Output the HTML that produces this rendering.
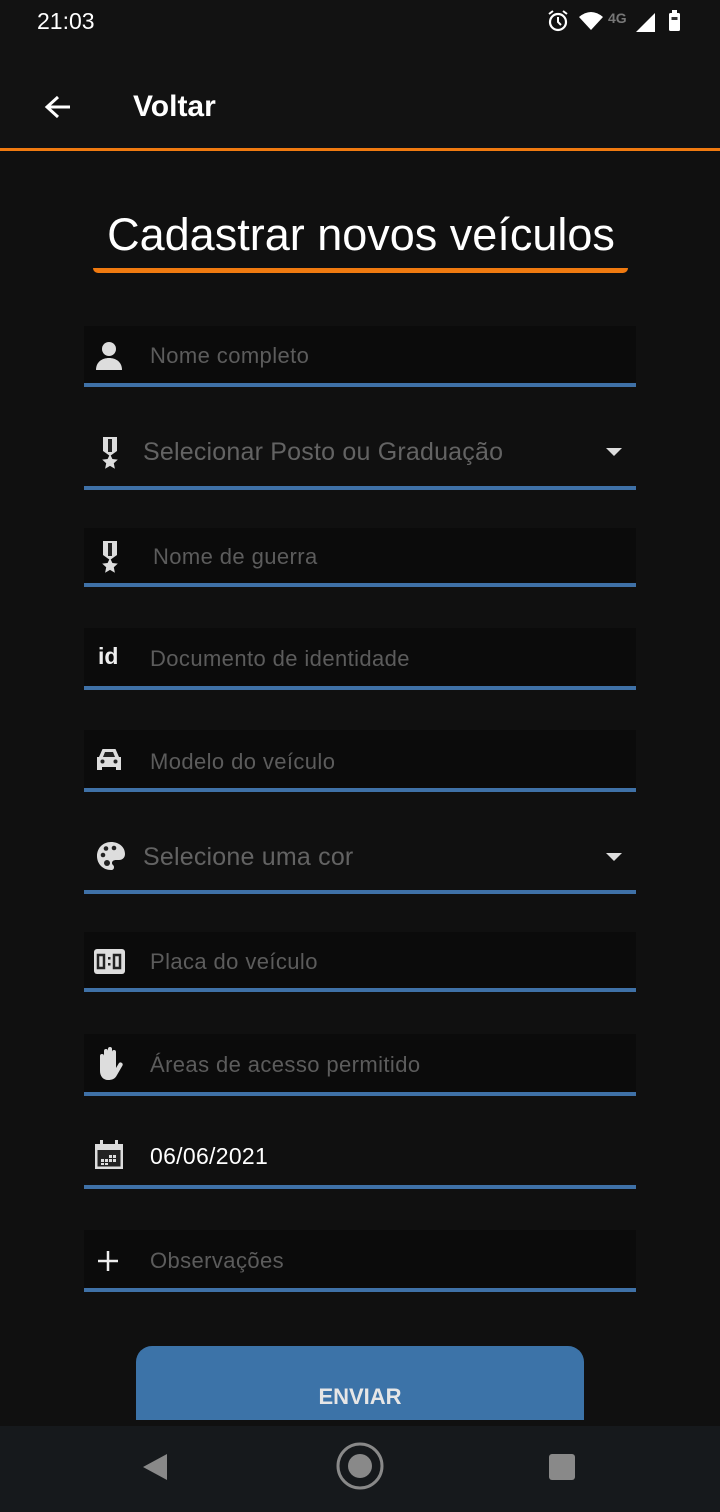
<!DOCTYPE html>
<html><head><meta charset="utf-8"><style>
*{margin:0;padding:0;box-sizing:border-box}
body{width:720px;height:1512px;background:#101010;position:relative;overflow:hidden;font-family:"Liberation Sans",sans-serif}
.abs{position:absolute}
.top{left:0;top:0;width:720px;height:148px;background:#121212}
.orange{left:0;top:148px;width:720px;height:3px;background:#f07a10}
.box{position:absolute;left:84px;width:552px;background:#0b0b0b}
.ul{position:absolute;left:84px;width:552px;height:4px;background:#3f71a7}
.ph{position:absolute;color:#5c5c5c;font-size:22px;letter-spacing:0.4px;line-height:1;white-space:nowrap}
.sel{font-size:25px;color:#636363;letter-spacing:0.2px}
.ic{position:absolute;left:94px}
.arr{position:absolute;left:606px;width:0;height:0;border-left:8px solid transparent;border-right:8px solid transparent;border-top:8px solid #ddd}
</style></head><body>
<div class="abs top"></div>
<div class="abs orange"></div>
<div class="abs" style="left:37px;top:8px;color:#fff;font-size:23px">21:03</div>
<svg class="abs" style="left:545px;top:8px" width="145" height="26" viewBox="0 0 145 26">
<circle cx="13" cy="14" r="8" fill="none" stroke="#fff" stroke-width="2.2"/><path d="M13 9v5l3 3" stroke="#fff" stroke-width="2" fill="none"/><path d="M4 6l4-3M22 6l-4-3" stroke="#fff" stroke-width="2"/>
<path d="M34 9 Q46 -1 58 9 L46 22Z" fill="#fff"/>
<text x="63" y="15" fill="#777" font-size="14" font-family="Liberation Sans" font-weight="bold">4G</text>
<path d="M91 24 L110 5 L110 24Z" fill="#fff"/>
<rect x="124" y="5" width="11" height="18" rx="1.5" fill="#fff"/><rect x="127" y="2" width="5" height="4" fill="#fff"/><rect x="126.5" y="9" width="6" height="3" fill="#333"/>
</svg>
<svg class="abs" style="left:44px;top:94px" width="28" height="26" viewBox="0 0 28 26"><path d="M26 13H4M14 3L3 13l11 10" stroke="#fff" stroke-width="3" fill="none"/></svg>
<div class="abs" style="left:133px;top:90px;color:#fff;font-size:30px;font-weight:bold">Voltar</div>
<div class="abs" style="left:0;width:720px;top:209px;text-align:center;color:#fff;font-size:45px;padding-left:2px">Cadastrar novos veículos</div>
<div class="abs" style="left:93px;top:268px;width:535px;height:5px;background:#f07a10;border-radius:0 0 6px 6px"></div>

<div class="box" style="top:326px;height:58px"></div>
<svg class="ic" style="top:340px" width="30" height="32" viewBox="0 0 30 32"><circle cx="15" cy="9" r="7" fill="#ddd"/><path d="M2 30c0-8 6-12 13-12s13 4 13 12z" fill="#ddd"/></svg>
<div class="ph" style="left:150px;top:345px">Nome completo</div>
<div class="ul" style="top:383px"></div>

<svg class="ic" style="top:437px;left:100px" width="20" height="32" viewBox="0 0 20 32"><path d="M3 0h14v14l-7 5-7-5z" fill="#ddd"/><path d="M8 2v13h4V2z" fill="#222"/><path d="M10 17l2.4 5 5.4.6-4 3.7 1.1 5.4-4.9-2.8-4.9 2.8 1.1-5.4-4-3.7 5.4-.6z" fill="#ddd"/></svg>
<div class="ph sel" style="left:143px;top:440px">Selecionar Posto ou Graduação</div>
<div class="arr" style="top:448px"></div>
<div class="ul" style="top:486px"></div>

<div class="box" style="top:528px;height:56px"></div>
<svg class="ic" style="top:541px;left:100px" width="20" height="32" viewBox="0 0 20 32"><path d="M3 0h14v14l-7 5-7-5z" fill="#ddd"/><path d="M8 2v13h4V2z" fill="#222"/><path d="M10 17l2.4 5 5.4.6-4 3.7 1.1 5.4-4.9-2.8-4.9 2.8 1.1-5.4-4-3.7 5.4-.6z" fill="#ddd"/></svg>
<div class="ph" style="left:153px;top:546px">Nome de guerra</div>
<div class="ul" style="top:583px"></div>

<div class="box" style="top:628px;height:58px"></div>
<div class="abs" style="left:98px;top:643px;color:#eee;font-size:23px;font-weight:bold">id</div>
<div class="ph" style="left:150px;top:648px">Documento de identidade</div>
<div class="ul" style="top:686px"></div>

<div class="box" style="top:730px;height:58px"></div>
<svg class="ic" style="top:747px;left:95px" width="28" height="26" viewBox="0 0 28 24"><path d="M4 9l3.5-8h13L24 9h2v13h-5v-3H7v3H2V9z" fill="#ddd"/><path d="M8 9l2-5h8l2 5z" fill="#222"/><circle cx="7.5" cy="13.5" r="2" fill="#222"/><circle cx="20.5" cy="13.5" r="2" fill="#222"/></svg>
<div class="ph" style="left:150px;top:751px">Modelo do veículo</div>
<div class="ul" style="top:788px"></div>

<svg class="ic" style="top:840px;left:95px" width="32" height="32" viewBox="0 0 32 32"><path d="M16 2C8 2 2 8 2 16s6 14 14 14c2 0 3-1 3-3 0-2-2-2-2-4s2-3 4-3h3c4 0 6-3 6-6 0-7-6-12-14-12z" fill="#ddd"/><circle cx="8" cy="15" r="2.3" fill="#222"/><circle cx="11" cy="8.5" r="2.3" fill="#222"/><circle cx="19" cy="8" r="2.3" fill="#222"/><circle cx="12" cy="23" r="3" fill="#222"/></svg>
<div class="ph sel" style="left:143px;top:845px">Selecione uma cor</div>
<div class="arr" style="top:853px"></div>
<div class="ul" style="top:890px"></div>

<div class="box" style="top:932px;height:56px"></div>
<svg class="ic" style="top:949px" width="31" height="25" viewBox="0 0 31 25"><rect x="0" y="0" width="31" height="25" rx="3" fill="#ddd"/><rect x="4" y="6" width="6" height="13" fill="none" stroke="#222" stroke-width="2.5"/><rect x="20" y="6" width="6" height="13" fill="none" stroke="#222" stroke-width="2.5"/><rect x="14" y="8" width="2.5" height="2.5" fill="#222"/><rect x="14" y="14" width="2.5" height="2.5" fill="#222"/></svg>
<div class="ph" style="left:150px;top:951px">Placa do veículo</div>
<div class="ul" style="top:988px"></div>

<div class="box" style="top:1034px;height:58px"></div>
<svg class="ic" style="top:1047px;left:96px" width="28" height="34" viewBox="0 0 28 34"><path d="M4 20V9a2 2 0 014 0v8V4a2 2 0 014 0v12V2a2 2 0 014 0v14V5a2 2 0 014 0v16l3-5a2.2 2.2 0 013.5 2.5L21 28c-2 4-5 5-9 5-5 0-8-4-8-9z" fill="#ddd"/></svg>
<div class="ph" style="left:150px;top:1054px">Áreas de acesso permitido</div>
<div class="ul" style="top:1092px"></div>

<svg class="ic" style="top:1140px;left:94px" width="30" height="30" viewBox="0 0 30 30"><rect x="1" y="4" width="28" height="25" fill="#ddd"/><rect x="6" y="0" width="3" height="6" fill="#ddd"/><rect x="21" y="0" width="3" height="6" fill="#ddd"/><rect x="3.5" y="10" width="23" height="16.5" fill="#222"/><g fill="#ddd"><rect x="7" y="19" width="3" height="3"/><rect x="11" y="19" width="3" height="3"/><rect x="15" y="19" width="3" height="3"/><rect x="19" y="15" width="3" height="3"/><rect x="15" y="15" width="3" height="3"/><rect x="19" y="19" width="3" height="3"/><rect x="7" y="23" width="3" height="2"/><rect x="11" y="23" width="3" height="2"/></g></svg>
<div class="ph" style="left:150px;top:1145px;color:#fff;font-size:23px;letter-spacing:0.3px">06/06/2021</div>
<div class="ul" style="top:1185px"></div>

<div class="box" style="top:1230px;height:58px"></div>
<svg class="ic" style="top:1250px;left:97px" width="22" height="22" viewBox="0 0 22 22"><path d="M11 1v20M1 11h20" stroke="#eee" stroke-width="2.5"/></svg>
<div class="ph" style="left:150px;top:1250px">Observações</div>
<div class="ul" style="top:1288px"></div>

<div class="abs" style="left:136px;top:1346px;width:448px;height:74px;background:#3c73a8;border-radius:16px 16px 0 0"></div>
<div class="abs" style="left:136px;width:448px;top:1384px;text-align:center;color:#e6e6e6;font-size:22px;font-weight:bold">ENVIAR</div>

<div class="abs" style="left:0;top:1426px;width:720px;height:86px;background:#16191c"></div>
<svg class="abs" style="left:140px;top:1450px" width="30" height="34"><path d="M27 4v26L3 17z" fill="#898989"/></svg>
<svg class="abs" style="left:334px;top:1440px" width="52" height="52"><circle cx="26" cy="26" r="22" fill="none" stroke="#898989" stroke-width="3"/><circle cx="26" cy="26" r="12" fill="#898989"/></svg>
<div class="abs" style="left:549px;top:1454px;width:26px;height:26px;background:#898989;border-radius:3px"></div>
</body></html>
